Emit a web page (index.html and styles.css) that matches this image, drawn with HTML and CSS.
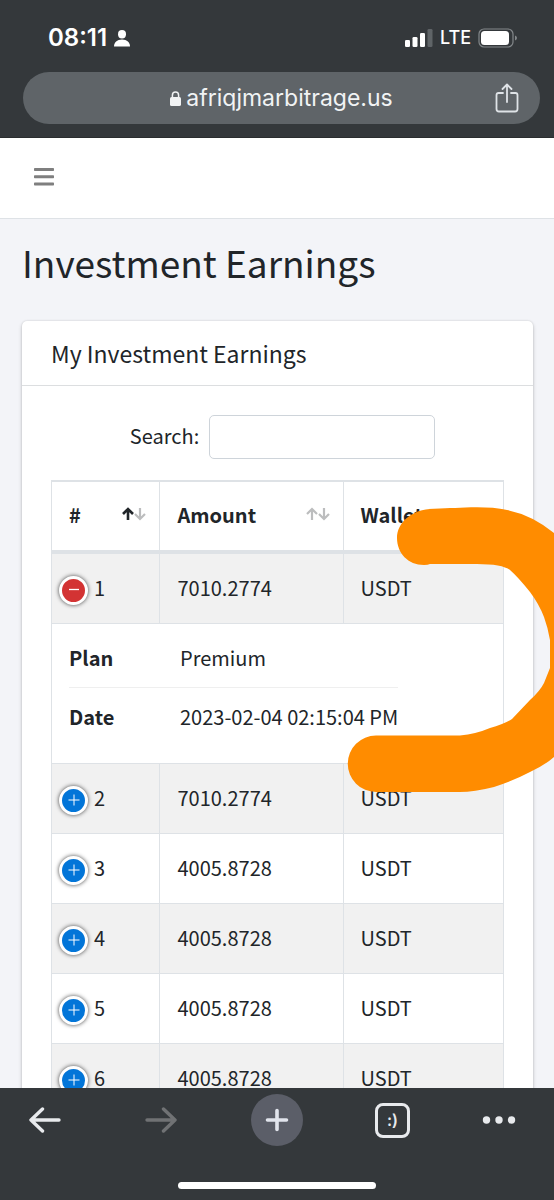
FILE: index.html
```html
<!DOCTYPE html>
<html lang="en">
<head>
<meta charset="utf-8">
<meta name="viewport" content="width=device-width, initial-scale=1">
<title>Investment Earnings</title>
<link rel="stylesheet" href="styles.css">
</head>
<body>
<header class="chrome-top">
  <div class="status">
    <div class="status-side">
      <span class="clock">08:11</span>
      <svg viewBox="0 0 16 17" width="16" height="17" fill="#fff"><ellipse cx="8" cy="4.2" rx="4" ry="4.2"/><path d="M0 16.5c0-4 3-7 8-7s8 3 8 7z"/></svg>
    </div>
    <div class="status-side">
      <svg viewBox="0 0 28 18" width="28" height="18" fill="#fff"><rect y="11" width="5" height="7" rx="1.3"/><rect x="7.5" y="8" width="5" height="10" rx="1.3"/><rect x="15" y="4" width="5" height="14" rx="1.3"/><rect x="22.5" width="5" height="18" rx="1.3" fill="#5f6467"/></svg>
      <span class="network">LTE</span>
      <svg viewBox="0 0 40 20" width="40" height="20"><rect x="1" y="1" width="34" height="18" rx="5" fill="none" stroke="#84888b" stroke-width="1.2"/><rect x="3" y="3" width="28" height="14" rx="3.5" fill="#fff"/><path d="M37 7.5q2 .8 2 2.5t-2 2.5z" fill="#84888b"/></svg>
    </div>
  </div>
  <div class="address">
    <a class="url" href="#">
      <svg viewBox="0 0 11 15" width="11" height="15"><rect y="6" width="11" height="9" rx="1.6" fill="#f1f3f4"/><path d="M2.4 7V4.2a3.1 3.1 0 0 1 6.2 0V7" fill="none" stroke="#f1f3f4" stroke-width="1.5"/></svg>
      <span>afriqjmarbitrage.us</span>
    </a>
    <button class="icon-button share" type="button" aria-label="Share">
      <svg viewBox="0 0 24 30" width="24" height="30" fill="none" stroke="#dfe3e7" stroke-width="1.8" stroke-linecap="round" stroke-linejoin="round"><path d="M8 10H3.5Q1.500 10 1.500 12V26Q1.500 28.500 4 28.500H20Q22.500 28.500 22.500 26V12Q22.500 10 20.500 10H16"/><path d="M12 19V2M7.500 6 12 1.500 16.500 6"/></svg>
    </button>
  </div>
</header>

<main class="page">
  <nav class="navbar">
    <button class="icon-button" type="button" aria-label="Toggle menu">
      <svg viewBox="0 0 20 18" width="20" height="18" fill="#7f7f7f"><rect width="20" height="3" rx=".7"/><rect y="7.200" width="20" height="3" rx=".7"/><rect y="14.500" width="20" height="3" rx=".7"/></svg>
    </button>
  </nav>
  <h1 class="page-title">Investment Earnings</h1>
  <section class="card">
    <h2 class="card-title">My Investment Earnings</h2>
    <div class="card-body">
      <div class="search">
        <label for="search">Search:</label>
        <input id="search" type="search">
      </div>
      <table class="earnings">
        <colgroup><col class="col-index"><col class="col-amount"><col class="col-wallet"></colgroup>
        <thead>
          <tr>
            <th scope="col"><button class="sort" type="button">#<svg viewBox="0 0 24 14" width="24" height="14" fill="none" stroke-width="2.200"><path stroke="#bcbdbe" d="M18 1v11M13 7l5 5 5-5"/><path stroke="#212529" stroke-width="2.600" d="M6 13V2M1 7 6 2l5 5"/></svg></button></th>
            <th scope="col"><button class="sort" type="button">Amount<svg viewBox="0 0 24 14" width="24" height="14" fill="none" stroke="#bcbdbe" stroke-width="2.200"><path d="M6 13V2M1 7 6 2l5 5"/><path d="M18 1v11M13 7l5 5 5-5"/></svg></button></th>
            <th scope="col"><button class="sort" type="button">Wallet</button></th>
          </tr>
        </thead>
        <tbody>
          <tr class="odd"><td><div class="index"><button class="toggle open" type="button" aria-label="Hide details"><svg viewBox="0 0 12 12" width="12" height="12" stroke="#fff" stroke-width="1.300"><path d="M1 5.500h10"/></svg></button>1</div></td><td>7010.2774</td><td>USDT</td></tr>
          <tr class="child">
            <td colspan="3">
              <ul class="details">
                <li><span class="detail-name">Plan</span><span>Premium</span></li>
                <li><span class="detail-name">Date</span><span>2023-02-04 02:15:04 PM</span></li>
              </ul>
            </td>
          </tr>
          <tr class="odd"><td><div class="index"><button class="toggle" type="button" aria-label="Show details"><svg viewBox="0 0 12 12" width="12" height="12" stroke="#fff" stroke-width="1"><path d="M.5 6h11M6 .5v11"/></svg></button>2</div></td><td>7010.2774</td><td>USDT</td></tr>
          <tr><td><div class="index"><button class="toggle" type="button" aria-label="Show details"><svg viewBox="0 0 12 12" width="12" height="12" stroke="#fff" stroke-width="1"><path d="M.5 6h11M6 .5v11"/></svg></button>3</div></td><td>4005.8728</td><td>USDT</td></tr>
          <tr class="odd"><td><div class="index"><button class="toggle" type="button" aria-label="Show details"><svg viewBox="0 0 12 12" width="12" height="12" stroke="#fff" stroke-width="1"><path d="M.5 6h11M6 .5v11"/></svg></button>4</div></td><td>4005.8728</td><td>USDT</td></tr>
          <tr><td><div class="index"><button class="toggle" type="button" aria-label="Show details"><svg viewBox="0 0 12 12" width="12" height="12" stroke="#fff" stroke-width="1"><path d="M.5 6h11M6 .5v11"/></svg></button>5</div></td><td>4005.8728</td><td>USDT</td></tr>
          <tr class="odd"><td><div class="index"><button class="toggle" type="button" aria-label="Show details"><svg viewBox="0 0 12 12" width="12" height="12" stroke="#fff" stroke-width="1"><path d="M.5 6h11M6 .5v11"/></svg></button>6</div></td><td>4005.8728</td><td>USDT</td></tr>
        </tbody>
      </table>
    </div>
  </section>
  <svg class="marker" viewBox="0 0 208 288" width="208" height="288" fill="#ff8c00"><path d="M88 1.700C104 1.500 114 .3 131 .3C142 .3 152 1 161 3Q186 8 208 26V250Q199 258 184 265Q167 274 148 280Q128 285 114 285H30A28.250 28.250 0 0 1 30 228.500H114Q130 227 144 221Q158 217 166 212L184 193Q194 184 198 176L204 161V133Q202 121 198 110Q193 97 184 85Q172 70 164 63Q156 57 131 57H84Q82 58 78 58C62 58 51 46 51 31C51 16 65 2 88 1.700Z"/></svg>
</main>

<footer class="chrome-bottom">
  <div class="toolbar">
    <button class="icon-button" type="button" aria-label="Back"><svg viewBox="0 0 32 28" width="32" height="28" fill="none" stroke="#e8eaed" stroke-width="3.400" stroke-linecap="round" stroke-linejoin="round"><path d="M30 14H2M13.500 3 2 14l11.500 11"/></svg></button>
    <button class="icon-button forward" type="button" aria-label="Forward" disabled><svg viewBox="0 0 32 28" width="32" height="28" fill="none" stroke="#707274" stroke-width="3.400" stroke-linecap="round" stroke-linejoin="round"><path d="M2 14h28M18.500 3 30 14 18.500 25"/></svg></button>
    <button class="icon-button new-tab" type="button" aria-label="New tab"><svg viewBox="0 0 24 24" width="24" height="24" stroke="#e1e4ec" stroke-width="3.600" stroke-linecap="round"><path d="M2.500 12h19M12 2.500v19"/></svg></button>
    <button class="icon-button tabs" type="button" aria-label="Open tabs">:)</button>
    <button class="icon-button" type="button" aria-label="More"><svg viewBox="0 0 34 8" width="34" height="8" fill="#e8eaed"><circle cx="4.500" cy="4" r="3.700"/><circle cx="17" cy="4" r="3.700"/><circle cx="29.500" cy="4" r="3.700"/></svg></button>
  </div>
  <div class="home-bar"></div>
</footer>
</body>
</html>
```
FILE: styles.css
```css
* {
  box-sizing: border-box;
}

body {
  margin: 0;
  height: 100vh;
  display: flex;
  flex-direction: column;
  overflow: hidden;
  background: #f3f4f8;
  color: #212529;
  font: 20px/30px "Noto Sans CJK SC", "Open Sans", sans-serif;
}

svg {
  display: block;
  flex: none;
}

button {
  margin: 0;
  padding: 0;
  border: 0;
  background: none;
  color: inherit;
  font: inherit;
}

.icon-button {
  display: flex;
  align-items: center;
  justify-content: center;
}

.chrome-top,
.chrome-bottom {
  flex: none;
  background: #34383b;
  color: #fff;
  font-family: Inter, "Liberation Sans", sans-serif;
}

.chrome-top {
  padding: 23px 14px 13px 23px;
  border-bottom: 1px solid #2a2d2f;
}

.status {
  display: flex;
  justify-content: space-between;
  padding: 0 22px 0 25px;
  margin-bottom: 19px;
}

.status-side {
  display: flex;
  align-items: center;
  gap: 7px;
}

.clock {
  font-size: 24px;
  font-weight: 600;
}

.network {
  font-size: 18px;
  font-weight: 500;
}

.address {
  position: relative;
  display: flex;
  justify-content: center;
  align-items: center;
  height: 52px;
  border-radius: 26px;
  background: #5f6468;
}

.url {
  display: flex;
  align-items: center;
  gap: 5px;
  color: #f1f3f4;
  font-size: 23px;
  text-decoration: none;
}

.share {
  position: absolute;
  right: 21px;
}

.page {
  position: relative;
  flex: 1;
  min-height: 0;
  overflow-y: auto;
  scrollbar-width: none;
}

.navbar {
  display: flex;
  align-items: center;
  height: 81px;
  padding: 0 34px 3px;
  border-bottom: 1px solid #dee2e6;
  background: #fff;
}

.page-title {
  margin: 0;
  padding: 18px 22px 34px;
  font-size: 37px;
  font-weight: 400;
  line-height: 50px;
}

.card {
  margin: 0 21px 0 22px;
  border-radius: 5px;
  background: #fff;
  box-shadow: 0 0 2px rgba(0, 0, 0, .15), 0 2px 4px rgba(0, 0, 0, .18);
}

.card-title {
  margin: 0;
  padding: 17px 29px;
  border-bottom: 1px solid #dcdee0;
  font-size: 23px;
  font-weight: 400;
  line-height: 30px;
}

.card-body {
  padding: 29px 29px 32px;
}

.search {
  display: flex;
  justify-content: center;
  align-items: center;
  gap: 10px;
  margin-bottom: 21px;
  padding-left: 10px;
}

.search label {
  padding-bottom: 2px;
}

.search input {
  width: 51%;
  height: 44px;
  padding: 0 12px;
  border: 1px solid #ced4da;
  border-radius: 5px;
  background: #fff;
  font: inherit;
}

.earnings {
  width: 100%;
  table-layout: fixed;
  border-collapse: separate;
  border-spacing: 0;
  border-top: 2px solid #dee2e6;
  border-left: 1px solid #dee2e6;
}

.col-index {
  width: 24%;
}

.col-amount {
  width: 40.5%;
}

.col-wallet {
  width: 35.5%;
}

.earnings th,
.earnings td {
  padding: 19px 17px 20px;
  border-right: 1px solid #dee2e6;
  border-bottom: 1px solid #dee2e6;
  text-align: left;
}

.earnings th {
  padding: 18px 17px 20px;
  border-bottom-width: 4px;
}

.earnings .child td {
  padding: 19px 17px 17px;
}

.odd td {
  background: #f1f1f1;
}

.sort {
  display: flex;
  justify-content: space-between;
  align-items: center;
  width: 100%;
  font-weight: 700;
}

.sort svg {
  margin: 0 -4px 2px 0;
}

.index {
  display: flex;
  align-items: center;
  gap: 6px;
  height: 30px;
  margin-left: -10px;
}

.toggle {
  display: flex;
  align-items: center;
  justify-content: center;
  width: 29px;
  height: 29px;
  margin-top: 4px;
  border: 3px solid #fff;
  border-radius: 50%;
  background: #0275d8;
  box-shadow: 0 0 4px #444;
}

.toggle.open {
  background: #d33333;
}

.details {
  display: inline-block;
  margin: 0;
  padding: 0;
  list-style: none;
  vertical-align: top;
}

.details li {
  display: flex;
  padding: 14px 0;
}

.details li:first-child {
  padding-top: 0;
  border-bottom: 1px solid #efefef;
}

.detail-name {
  width: 111px;
  font-weight: 700;
}

.marker {
  position: absolute;
  top: 369px;
  right: 0;
  pointer-events: none;
}

.chrome-bottom {
  padding: 6px 0 11px;
}

.toolbar {
  display: flex;
  justify-content: space-between;
  align-items: center;
  margin-bottom: 36px;
  padding: 0 38px 0 29px;
}

.forward {
  margin-left: 12px;
}

.new-tab {
  width: 52px;
  height: 52px;
  margin-left: 2px;
  border-radius: 50%;
  background: #5b5e68;
}

.tabs {
  width: 35px;
  height: 35px;
  border: 3px solid #e8eaed;
  border-radius: 8px;
  color: #e8eaed;
  font-size: 16px;
  font-weight: 600;
}

.home-bar {
  width: 198px;
  height: 7px;
  margin: 0 auto;
  border-radius: 4px;
  background: #fff;
}
```
